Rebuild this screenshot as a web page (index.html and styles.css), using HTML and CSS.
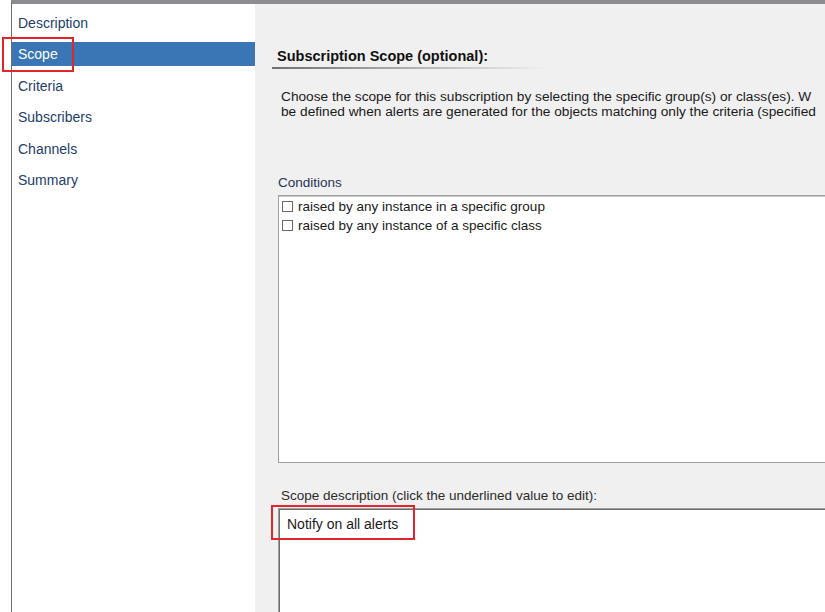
FILE: index.html
```html
<!DOCTYPE html>
<html>
<head>
<meta charset="utf-8">
<link rel="stylesheet" href="styles.css">
</head>
<body>
<div class="window">
  <div class="gutter"></div>
  <div class="frame">
    <nav class="nav">
      <div class="nav-item">Description</div>
      <div class="nav-item selected">Scope</div>
      <div class="nav-item">Criteria</div>
      <div class="nav-item">Subscribers</div>
      <div class="nav-item">Channels</div>
      <div class="nav-item">Summary</div>
    </nav>
    <main class="main">
      <div class="content">
        <h1 class="heading">Subscription Scope (optional):</h1>
        <div class="desc">
          <div class="desc-line">Choose the scope for this subscription by selecting the specific group(s) or class(es). W</div>
          <div class="desc-line">be defined when alerts are generated for the objects matching only the criteria (specified</div>
        </div>
        <div class="label conditions-label">Conditions</div>
        <div class="cond-box">
          <label class="cond-item"><span class="check"></span>raised by any instance in a specific group</label>
          <label class="cond-item"><span class="check"></span>raised by any instance of a specific class</label>
        </div>
        <div class="label scope-label">Scope description (click the underlined value to edit):</div>
        <div class="scope-box">
          <div class="scope-text">Notify on all alerts</div>
        </div>
      </div>
    </main>
  </div>
  <div class="highlight hl-scope"></div>
  <div class="highlight hl-notify"></div>
</div>
</body>
</html>
```
FILE: styles.css
```css
html, body {
  margin: 0;
  padding: 0;
  background: #ffffff;
}
body {
  font-family: "Liberation Sans", Arial, sans-serif;
  overflow: hidden;
}
.window {
  position: relative;
  display: flex;
  width: 825px;
  height: 612px;
  overflow: hidden;
}
.gutter {
  width: 11px;
  flex: none;
  background: #ffffff;
}
.frame {
  flex: 1;
  display: flex;
  border-top: 4px solid #8c8d90;
  border-left: 1px solid #6e6e72;
  min-width: 0;
}
.nav {
  width: 243px;
  flex: none;
  background: #ffffff;
  display: flex;
  flex-direction: column;
  gap: 7.4px;
  padding-top: 7px;
}
.nav-item {
  height: 24px;
  line-height: 25px;
  padding-left: 6px;
  font-size: 14px;
  color: #233d6b;
}
.nav-item.selected {
  background: #3a76b5;
  color: #ffffff;
}
.main {
  flex: 1;
  background: #f0f0f0;
  overflow: hidden;
  min-width: 0;
}
.content {
  width: 560px;
  padding-left: 17px;
}
.heading {
  margin: 44px 0 0 0;
  padding: 0 0 4px 5px;
  width: 268px;
  font-size: 14.5px;
  line-height: 16px;
  font-weight: bold;
  color: #111111;
  position: relative;
}
.heading::after {
  content: "";
  display: block;
  height: 2px;
  margin-left: -5px;
  margin-top: 3px;
  width: 273px;
  background: linear-gradient(to right, #707070 0%, #a8a8a8 45%, #f0f0f0 100%);
}
.desc {
  margin-top: 16px;
  padding-left: 9px;
  font-size: 13.7px;
  line-height: 15px;
  color: #1a1a1a;
}
.desc-line {
  white-space: nowrap;
}
.label {
  font-size: 13.5px;
  line-height: 16px;
  white-space: nowrap;
}
.conditions-label {
  margin-top: 56px;
  padding-left: 6px;
  color: #1f3555;
}
.cond-box {
  margin-top: 4px;
  margin-left: 6px;
  height: 265px;
  background: #ffffff;
  border: 1px solid #a0a0a0;
  box-shadow: inset 0 1px 0 #c8c8c8;
  padding-top: 1px;
  box-sizing: content-box;
  display: flex;
  flex-direction: column;
}
.cond-item {
  display: flex;
  align-items: center;
  height: 19px;
  padding-left: 3px;
  font-size: 13.5px;
  color: #1a1a1a;
  white-space: nowrap;
}
.check {
  width: 9px;
  height: 9px;
  border: 1px solid #6a6a6a;
  background: #ffffff;
  margin-right: 5px;
  flex: none;
}
.scope-label {
  margin-top: 25px;
  padding-left: 9px;
  color: #2b2b2b;
}
.scope-box {
  margin-top: 4px;
  margin-left: 6px;
  height: 120px;
  background: #ffffff;
  border-top: 1px solid #a0a0a0;
  border-left: 1px solid #a0a0a0;
  box-shadow: inset 1px 1px 0 #6d6d6d;
  padding: 6px 0 0 8px;
}
.scope-text {
  font-size: 14px;
  line-height: 18px;
  color: #1a1a1a;
}
.highlight {
  position: absolute;
  border: 2px solid #e3242b;
  box-sizing: border-box;
  pointer-events: none;
}
.hl-scope {
  left: 2px;
  top: 37px;
  width: 72px;
  height: 35px;
}
.hl-notify {
  left: 271px;
  top: 505px;
  width: 144px;
  height: 35px;
}
```
